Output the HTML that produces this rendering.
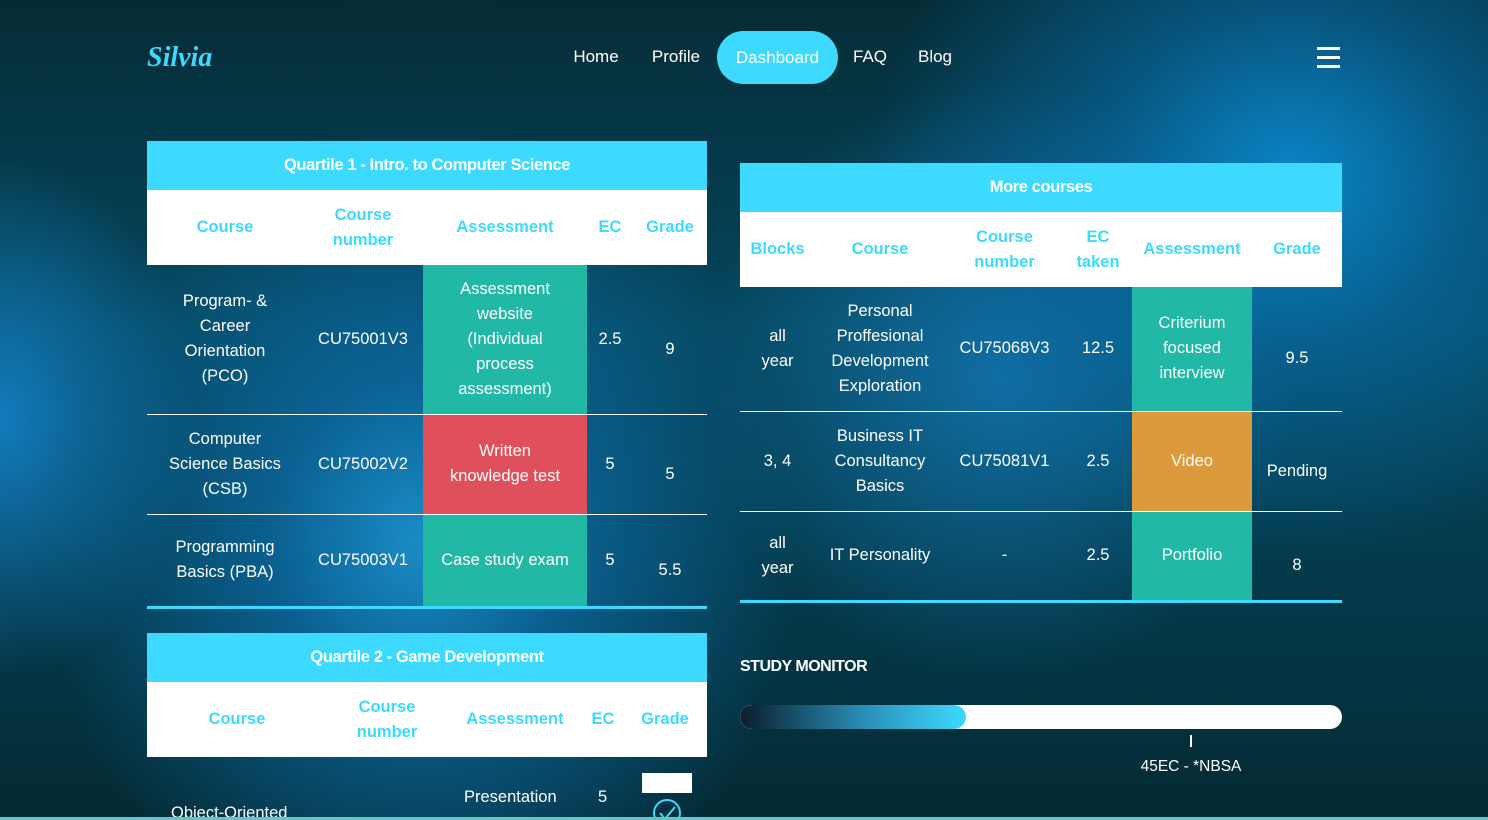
<!DOCTYPE html>
<html><head><meta charset="utf-8">
<style>
*{margin:0;padding:0;box-sizing:border-box}
html,body{width:1488px;height:820px;overflow:hidden}
body{position:relative;font-family:"Liberation Sans",sans-serif;color:#fff;
background:
radial-gradient(ellipse 420px 380px at 1290px 180px,#0a86c8 0%,rgba(8,110,170,.6) 45%,rgba(5,60,90,0) 100%),
radial-gradient(ellipse 380px 420px at 420px 540px,#1a8cc8 0%,rgba(12,110,170,.7) 40%,rgba(5,60,90,0) 100%),
radial-gradient(ellipse 200px 260px at 0px 420px,rgba(20,130,200,.9) 0%,rgba(5,60,90,0) 100%),
radial-gradient(ellipse 300px 300px at 1000px 380px,rgba(20,120,180,.8) 0%,rgba(5,60,90,0) 100%),
linear-gradient(180deg,#052c36 0%,#05475e 40%,#043544 80%,#042a33 100%);}
.logo{position:absolute;left:147px;top:42px;font-family:"Liberation Serif",serif;font-style:italic;font-weight:bold;font-size:28px;color:#3dd9fe}
.nav a{position:absolute;top:47px;font-size:17px;color:#fff;text-decoration:none;transform:translateX(-50%)}
.pill{position:absolute;left:717px;top:31px;width:121px;height:53px;border-radius:27px;background:#3dd9fe;font-size:17px;text-align:center;line-height:53px}
.burger{position:absolute;left:1317px;top:47px;width:23px}
.burger i{display:block;height:3px;background:#fff;margin-bottom:6px}
table{position:absolute;border-collapse:collapse;table-layout:fixed;font-size:16.5px}
th.cap{background:#3dd9fe;height:49px;font-size:16.5px;color:#fff;letter-spacing:-.4px}
thead tr.h td{background:#fff;color:#3dd9fe;font-weight:bold;height:75px;text-align:center;line-height:25px}
tbody td{text-align:center;vertical-align:middle;line-height:25px;border-bottom:1px solid #fff}
tbody tr:last-child td{border-bottom:3px solid #3dd9fe}
.t{background:#22b8a6}.r{background:#e0505c}.o{background:#dc9a3c}
.g{padding-top:20px}
</style></head><body>
<div class="logo">Silvia</div>
<div class="nav"><a style="left:596px">Home</a><a style="left:676px">Profile</a><a style="left:870px">FAQ</a><a style="left:935px">Blog</a></div>
<div class="pill">Dashboard</div>
<div class="burger"><i></i><i></i><i></i></div>

<table style="left:147px;top:141px;width:560px">
<colgroup><col style="width:156px"><col style="width:120px"><col style="width:164px"><col style="width:46px"><col style="width:74px"></colgroup>
<thead><tr><th class="cap" colspan="5">Quartile 1 - Intro. to Computer Science</th></tr>
<tr class="h"><td>Course</td><td>Course<br>number</td><td>Assessment</td><td>EC</td><td>Grade</td></tr></thead>
<tbody>
<tr style="height:149px"><td>Program- &amp;<br>Career<br>Orientation<br>(PCO)</td><td>CU75001V3</td><td class="t">Assessment<br>website<br>(Individual<br>process<br>assessment)</td><td>2.5</td><td class="g">9</td></tr>
<tr style="height:100px"><td>Computer<br>Science Basics<br>(CSB)</td><td>CU75002V2</td><td class="r">Written<br>knowledge test</td><td>5</td><td class="g">5</td></tr>
<tr style="height:93px"><td>Programming<br>Basics (PBA)</td><td>CU75003V1</td><td class="t">Case study exam</td><td>5</td><td class="g">5.5</td></tr>
</tbody></table>

<table style="left:740px;top:163px;width:602px">
<colgroup><col style="width:75px"><col style="width:130px"><col style="width:119px"><col style="width:68px"><col style="width:120px"><col style="width:90px"></colgroup>
<thead><tr><th class="cap" colspan="6">More courses</th></tr>
<tr class="h"><td>Blocks</td><td>Course</td><td>Course<br>number</td><td>EC<br>taken</td><td>Assessment</td><td>Grade</td></tr></thead>
<tbody>
<tr style="height:124px"><td>all<br>year</td><td>Personal<br>Proffesional<br>Development<br>Exploration</td><td>CU75068V3</td><td>12.5</td><td class="t">Criterium<br>focused<br>interview</td><td class="g">9.5</td></tr>
<tr style="height:100px"><td>3, 4</td><td>Business IT<br>Consultancy<br>Basics</td><td>CU75081V1</td><td>2.5</td><td class="o">Video</td><td class="g">Pending</td></tr>
<tr style="height:90px"><td>all<br>year</td><td>IT Personality</td><td>-</td><td>2.5</td><td class="t">Portfolio</td><td class="g">8</td></tr>
</tbody></table>

<table style="left:147px;top:633px;width:560px">
<colgroup><col style="width:180px"><col style="width:120px"><col style="width:136px"><col style="width:40px"><col style="width:84px"></colgroup>
<thead><tr><th class="cap" colspan="5">Quartile 2 - Game Development</th></tr>
<tr class="h"><td>Course</td><td>Course<br>number</td><td>Assessment</td><td>EC</td><td>Grade</td></tr></thead>
</table>
<div style="position:absolute;left:171px;top:804px;font-size:16.5px">Object-Oriented</div>
<div style="position:absolute;left:464px;top:788px;font-size:16.5px">Presentation</div>
<div style="position:absolute;left:598px;top:788px;font-size:16.5px">5</div>
<div style="position:absolute;left:642px;top:773px;width:50px;height:20px;background:#fff"></div>
<svg style="position:absolute;left:652px;top:798px" width="30" height="30" viewBox="0 0 30 30"><circle cx="15" cy="15" r="13" fill="none" stroke="#3dd9fe" stroke-width="2"/><path d="M8 15 L13 21 L23 9" fill="none" stroke="#3dd9fe" stroke-width="2"/></svg>

<div style="position:absolute;left:740px;top:658px;font-size:16px;font-weight:bold;letter-spacing:-.5px">STUDY MONITOR</div>
<div style="position:absolute;left:740px;top:705px;width:602px;height:24px;border-radius:12px;background:#fff;overflow:hidden">
<div style="width:226px;height:24px;border-radius:12px;background:linear-gradient(90deg,#0a1e2c,#2a8fb8 55%,#3dd9fe)"></div></div>
<div style="position:absolute;left:1190px;top:735px;width:2px;height:12px;background:#fff"></div>
<div style="position:absolute;left:1191px;top:758px;transform:translateX(-50%);font-size:15.5px;white-space:nowrap">45EC - *NBSA</div>
<div style="position:absolute;left:0;top:817px;width:1488px;height:3px;background:#5cc8c8"></div>
</body></html>
